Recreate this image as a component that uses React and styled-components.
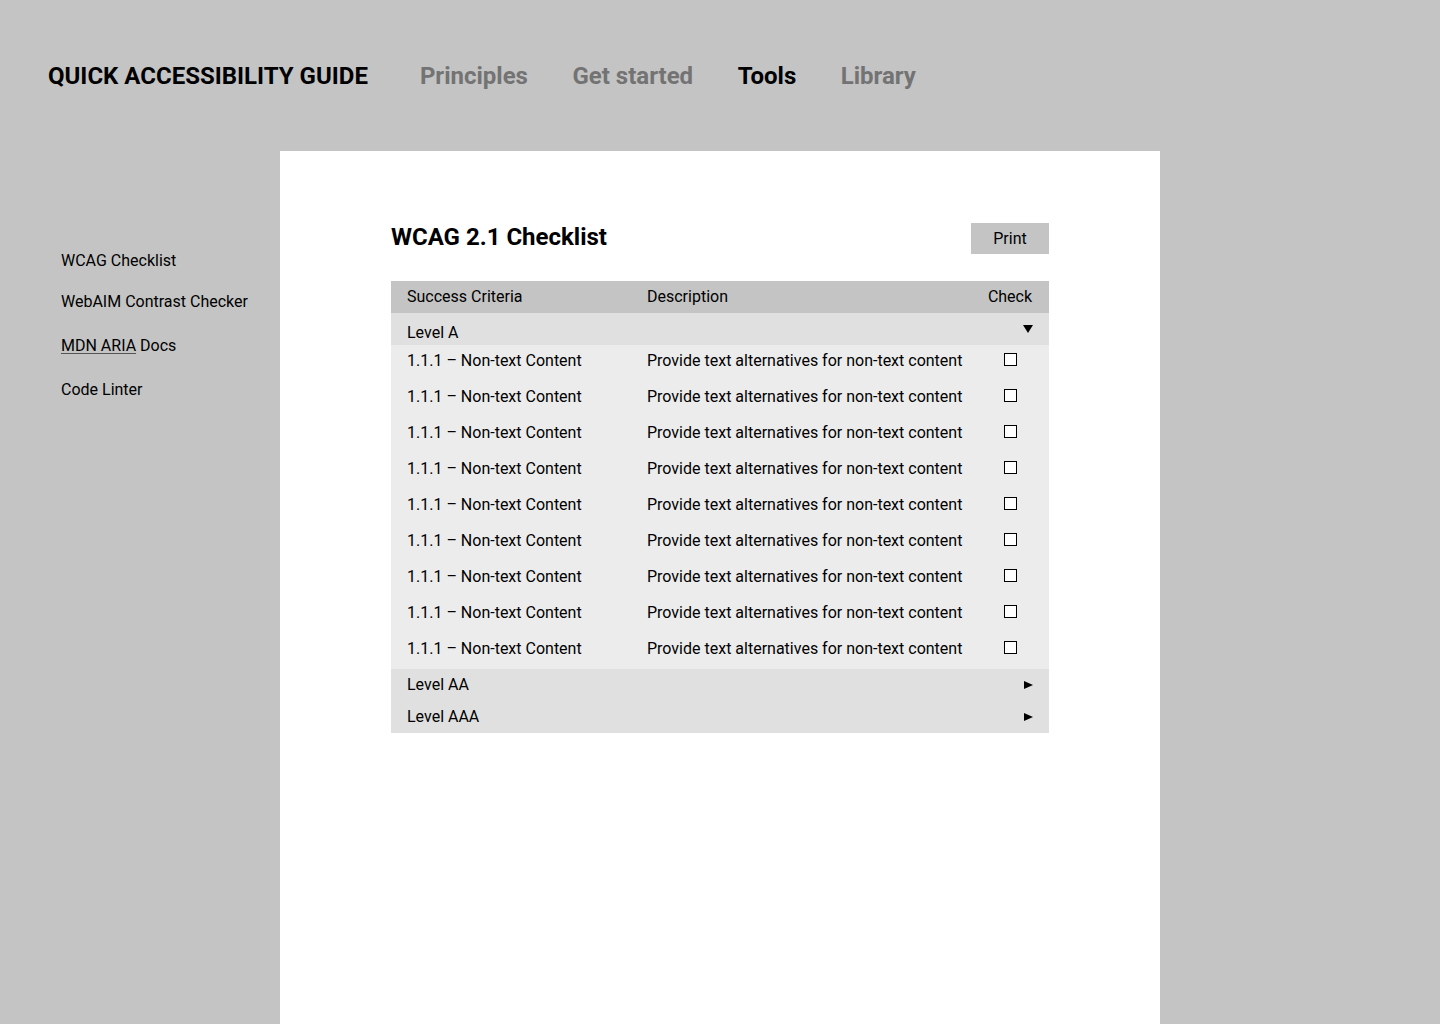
import React from 'react';
import styled, { createGlobalStyle } from 'styled-components';

const GlobalStyle = createGlobalStyle`
  body {
    margin: 0;
    background: #c4c4c4;
    font-family: Roboto, "Liberation Sans", Arial, sans-serif;
    color: #000;
  }
`;

const Page = styled.div`
  min-height: 100vh;
`;

const Header = styled.header`
  display: flex;
  align-items: center;
  padding: 62px 48px 61px;
  height: 28px;
`;

const Brand = styled.div`
  font-size: 24px;
  line-height: 28px;
  font-weight: 700;
  margin-right: 52px;
`;

const Nav = styled.nav`
  display: flex;
  gap: 44.5px;
`;

const NavLink = styled.a`
  font-size: 24px;
  line-height: 28px;
  font-weight: 700;
  color: ${(p) => (p.$active ? '#000' : '#737373')};
  text-decoration: none;
`;

const Body = styled.div`
  display: flex;
  align-items: stretch;
`;

const Sidebar = styled.aside`
  width: 280px;
  flex-shrink: 0;
  display: flex;
  flex-direction: column;
  gap: 24px;
  padding-top: 100px;
  box-sizing: border-box;
`;

const SideItem = styled.div`
  padding-left: 61px;
  font-size: 16px;
  line-height: 20px;
  margin-bottom: ${(p) => (p.$tight ? '-3px' : '0')};
`;

const Underlined = styled.span`
  text-decoration: underline;
  text-decoration-color: #555;
  text-underline-offset: 2px;
`;

const Panel = styled.main`
  width: 880px;
  min-height: calc(100vh - 151px);
  background: #fff;
  padding: 72px 111px 40px;
  box-sizing: border-box;
`;

const TitleRow = styled.div`
  display: flex;
  justify-content: space-between;
  align-items: center;
  height: 31px;
  margin-bottom: 27px;
`;

const Title = styled.h1`
  margin: 0 0 3px;
  font-size: 24px;
  line-height: 28px;
  font-weight: 700;
`;

const PrintButton = styled.button`
  width: 78px;
  height: 31px;
  border: none;
  background: #c4c4c4;
  font-family: inherit;
  font-size: 16px;
  color: #000;
  padding: 0;
  cursor: pointer;
`;

const Table = styled.div`
  width: 658px;
`;

const Row = styled.div`
  display: grid;
  grid-template-columns: 240px 1fr 46px;
  align-items: start;
  padding: ${(p) => p.$pad || '6px 16px 10px'};
  background: ${(p) => p.$bg || '#ececec'};
  font-size: 16px;
  line-height: 20px;
`;

const CheckHead = styled.div`
  text-align: center;
`;

const CheckCell = styled.div`
  display: flex;
  justify-content: center;
  padding-top: 2px;
`;

const Box = styled.span`
  display: block;
  width: 11px;
  height: 11px;
  border: 1px solid #000;
  background: #fff;
`;

const LevelRow = styled.div`
  display: flex;
  align-items: center;
  justify-content: space-between;
  height: 32px;
  padding: 0 16px;
  background: #e0e0e0;
  font-size: 16px;
  line-height: 20px;
`;

const LevelLabel = styled.span`
  margin-top: ${(p) => (p.$low ? '7px' : '0')};
`;

const Caret = styled.span`
  width: 0;
  height: 0;
  ${(p) =>
    p.$open
      ? `
    border-left: 5px solid transparent;
    border-right: 5px solid transparent;
    border-top: 8px solid #000;
  `
      : `
    border-top: 4.5px solid transparent;
    border-bottom: 4.5px solid transparent;
    border-left: 9px solid #000;
  `}
`;

const items = Array.from({ length: 9 }, () => ({
  id: '1.1.1 – Non-text Content',
  desc: 'Provide text alternatives for non-text content',
}));

const App = () => (
  <Page>
    <GlobalStyle />
    <Header>
      <Brand>QUICK ACCESSIBILITY GUIDE</Brand>
      <Nav>
        <NavLink>Principles</NavLink>
        <NavLink>Get started</NavLink>
        <NavLink $active>Tools</NavLink>
        <NavLink>Library</NavLink>
      </Nav>
    </Header>
    <Body>
      <Sidebar>
        <SideItem $tight>WCAG Checklist</SideItem>
        <SideItem>WebAIM Contrast Checker</SideItem>
        <SideItem>
          <Underlined>MDN ARIA</Underlined> Docs
        </SideItem>
        <SideItem>Code Linter</SideItem>
      </Sidebar>
      <Panel>
        <TitleRow>
          <Title>WCAG 2.1 Checklist</Title>
          <PrintButton>Print</PrintButton>
        </TitleRow>
        <Table>
          <Row $bg="#c4c4c4" $pad="6px 16px">
            <div>Success Criteria</div>
            <div>Description</div>
            <CheckHead>Check</CheckHead>
          </Row>
          <LevelRow>
            <LevelLabel $low>Level A</LevelLabel>
            <Caret $open />
          </LevelRow>
          {items.map((it, i) => (
            <Row key={i}>
              <div>{it.id}</div>
              <div>{it.desc}</div>
              <CheckCell>
                <Box />
              </CheckCell>
            </Row>
          ))}
          <LevelRow>
            <LevelLabel>Level AA</LevelLabel>
            <Caret />
          </LevelRow>
          <LevelRow>
            <LevelLabel>Level AAA</LevelLabel>
            <Caret />
          </LevelRow>
        </Table>
      </Panel>
    </Body>
  </Page>
);

export default App;
